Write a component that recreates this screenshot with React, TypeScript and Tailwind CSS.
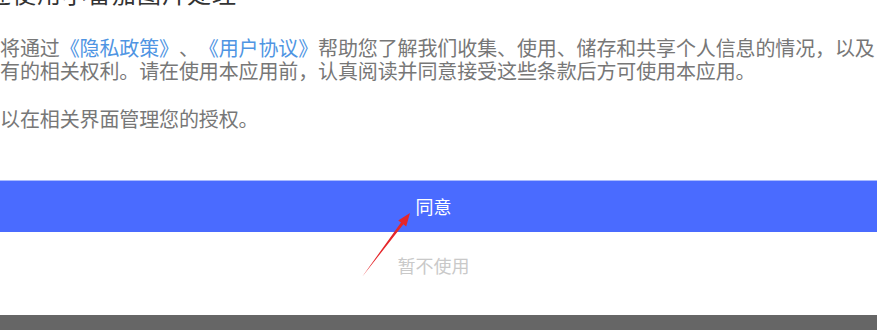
import React from 'react';

const font = { fontFamily: '"Noto Sans CJK SC", "Noto Sans", sans-serif' };

function Link({ children }: { children: React.ReactNode }) {
  return <span className="text-[#4f95e3]">{children}</span>;
}

export default function App() {
  return (
    <div
      className="relative w-[877px] h-[330px] overflow-hidden bg-white flex flex-col [text-spacing-trim:space-all]"
      style={font}
    >
      {/* Title (scrolled partly out of view) */}
      <h1 className="-mt-[19px] -ml-[38px] text-[24px] leading-[24px] text-[#333] whitespace-nowrap tracking-[1px]">
        欢迎使用小番茄图片处理
      </h1>

      {/* Body */}
      <div className="mt-[31px] text-[20px] leading-[23px] tracking-[-0.12px] text-[#777] whitespace-nowrap">
        <p>
          将通过<Link>《隐私政策》</Link>、<Link>《用户协议》</Link>帮助您了解我们收集、使用、储存和共享个人信息的情况，以及
        </p>
        <p>有的相关权利。请在使用本应用前，认真阅读并同意接受这些条款后方可使用本应用。</p>
        <p className="mt-[25px]">以在相关界面管理您的授权。</p>
      </div>

      {/* Actions */}
      <button className="mt-[50px] h-[52px] w-full pr-[10px] border-t border-[#a9baff] bg-[#4a6bff] text-white text-[18px] flex items-center justify-center">
        同意
      </button>
      <button className="h-[66px] w-full pr-[10px] text-[18px] text-[#c9c9c9] flex items-center justify-center">
        暂不使用
      </button>

      <div className="mt-auto h-[15px] bg-[#666]" />

      {/* Annotation arrow */}
      <svg className="absolute left-0 top-0" width="877" height="330" viewBox="0 0 877 330">
        <polygon
          points="410,213 398.2,220.4 401,222.5 362,277 403.4,224.3 406.2,226.4"
          fill="#e5262a"
        />
      </svg>
    </div>
  );
}
